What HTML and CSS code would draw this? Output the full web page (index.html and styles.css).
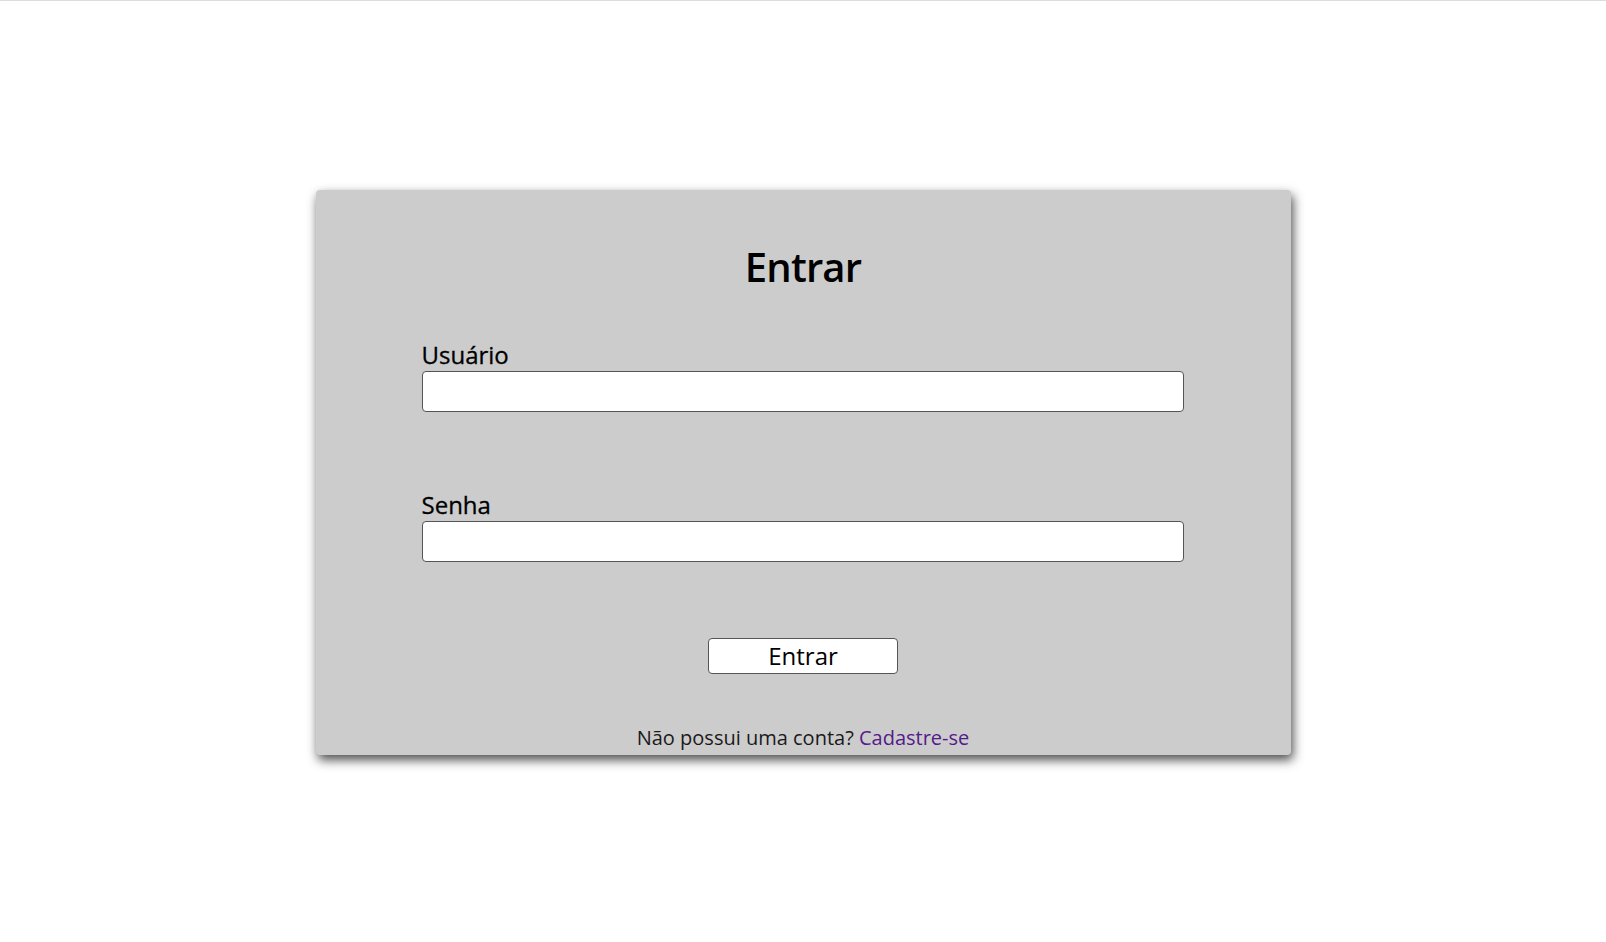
FILE: index.html
```html
<!DOCTYPE html>
<html lang="pt-BR">
<head>
<meta charset="utf-8">
<title>Entrar</title>
<link rel="stylesheet" href="styles.css">
</head>
<body>
<main class="page">
  <form class="card">
    <h1 class="title">Entrar</h1>
    <div class="field">
      <label class="label" for="user">Usuário</label>
      <input class="input" id="user" type="text">
    </div>
    <div class="field field-second">
      <label class="label" for="pass">Senha</label>
      <input class="input" id="pass" type="password">
    </div>
    <div class="actions">
      <button class="button" type="button">Entrar</button>
    </div>
    <p class="footer">Não possui uma conta? <a class="link" href="#">Cadastre-se</a></p>
  </form>
</main>
</body>
</html>
```

FILE: styles.css
```css
html, body {
  margin: 0;
  padding: 0;
  background: #fff;
}
body {
  font-family: "Open Sans", "Liberation Sans", sans-serif;
  color: #000;
  border-top: 1px solid #dcdcdc;
}
.page {
  display: flex;
  justify-content: center;
  align-items: flex-start;
  padding: 189px 0 60px 0;
}
.card {
  width: 975px;
  box-sizing: border-box;
  background: #cccccc;
  border-radius: 4px;
  box-shadow: 2px 5px 11px rgba(0, 0, 0, 0.7);
  padding: 50px 106px 4px 106px;
  display: flex;
  flex-direction: column;
}
.title {
  margin: 0;
  font-size: 40px;
  font-weight: 600;
  letter-spacing: -0.8px;
  line-height: 54px;
  text-align: center;
}
.field {
  display: flex;
  flex-direction: column;
  margin-top: 44px;
}
.field-second {
  margin-top: 76px;
}
.label {
  font-size: 24px;
  line-height: 33px;
  font-weight: 400;
  -webkit-text-stroke: 0.3px #000;
}
.input {
  box-sizing: border-box;
  width: 762px;
  height: 41px;
  margin: 0;
  border: 1px solid #555;
  border-radius: 4px;
  background: #fff;
  font: inherit;
}
.actions {
  display: flex;
  justify-content: center;
  margin-top: 76px;
}
.button {
  box-sizing: border-box;
  width: 190px;
  height: 36px;
  margin: 0;
  padding: 0;
  background: #fff;
  border: 1px solid #555;
  border-radius: 4px;
  font-family: "Open Sans", "Liberation Sans", sans-serif;
  font-size: 24px;
  line-height: 34px;
  color: #000;
}
.footer {
  margin: 50px 0 0 0;
  font-size: 20px;
  line-height: 27px;
  text-align: center;
  color: #1a1a1a;
}
.link {
  color: #551a8b;
  text-decoration: none;
}
```
